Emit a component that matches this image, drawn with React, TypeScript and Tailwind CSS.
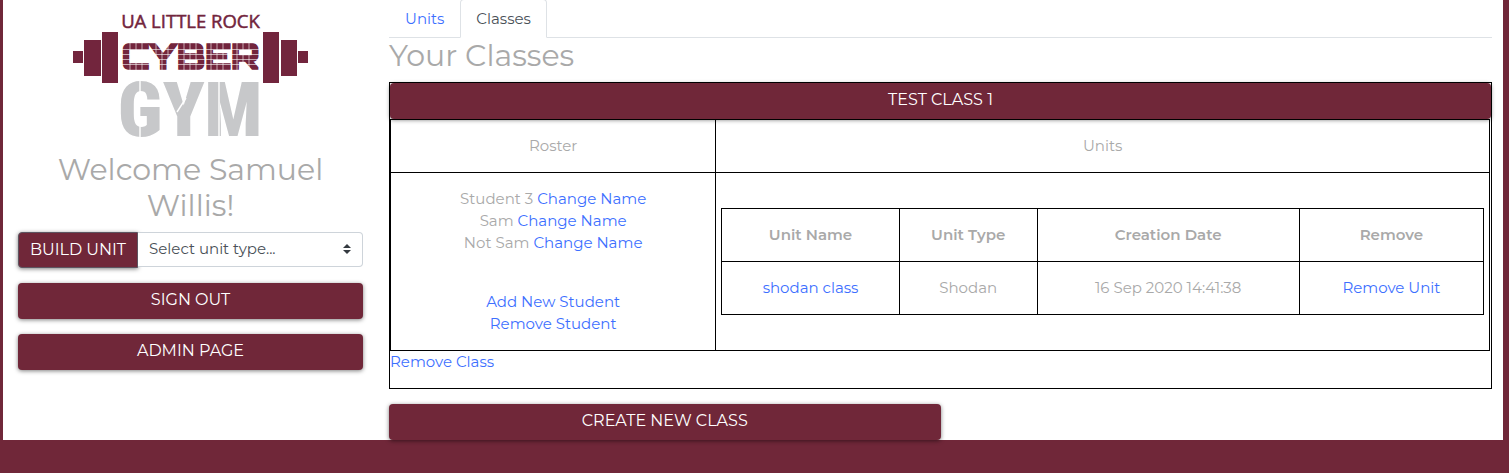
import { ReactNode } from "react";

const buttonStyle =
  "h-9 rounded-sm bg-[#702739] pb-0.5 text-center text-[16px] leading-[22px] font-normal text-white shadow-[0_1px_4px_rgba(0,0,0,0.5)] uppercase cursor-pointer";

const cell = "border border-black px-[5px] py-[15px]";

const students = ["Student 3", "Sam", "Not Sam"];

const units = [{ name: "shodan class", type: "Shodan", created: "16 Sep 2020 14:41:38" }];

function Link({ children }: { children: ReactNode }) {
  return (
    <a href="#" className="text-[#3d6fff] hover:underline">
      {children}
    </a>
  );
}

function Logo() {
  return (
    <svg viewBox="0 0 242 130" className="mx-auto block w-[242px] overflow-visible" role="img" aria-label="UA Little Rock Cyber Gym">
      <g fill="#72253d">
        <rect x="3" y="41" width="10" height="12" />
        <rect x="14" y="30" width="17" height="36" />
        <rect x="32" y="22" width="16" height="51" />
        <rect x="193" y="22" width="16" height="51" />
        <rect x="211" y="30" width="16" height="36" />
        <rect x="228" y="41" width="10" height="12" />
        <text x="120.5" y="18" textAnchor="middle" fontSize="18.5" fontFamily="Open Sans, sans-serif" stroke="#72253d" strokeWidth="0.5">
          UA LITTLE ROCK
        </text>
        <text x="120.5" y="59" textAnchor="middle" fontSize="34" fontWeight="800" fontFamily="Orbitron, DejaVu Sans Mono, monospace" stroke="#72253d" strokeWidth="1.6">
          CYBER
        </text>
      </g>
      <g stroke="#fff" strokeWidth="0.6">
        <path d="M52 39.5H190M52 44.5H190M52 49.5H190M52 54.5H190" />
        <path d="M60 29V63M66 29V63M72 29V63M86 29V63M92 29V63M98 29V63M114 29V63M120 29V63M126 29V63M141 29V63M147 29V63M153 29V63M167 29V63M173 29V63M179 29V63" />
      </g>
      <text x="120" y="126" textAnchor="middle" fontSize="76" fontWeight="900" fill="#c7c8ca" fontFamily="Roboto Condensed, sans-serif">
        GYM
      </text>
      <path d="M70 69V82M70 114V128M107 102L116 88M149 70V128" stroke="#fff" strokeWidth="1.4" />
    </svg>
  );
}

function Sidebar() {
  return (
    <aside className="w-1/4 px-[15px] pt-[10px]">
      <Logo />
      <h2 className="mt-3 mb-2 text-center text-[30px] leading-9">Welcome Samuel Willis!</h2>
      <div className="flex">
        <button className="h-9 w-[120px] rounded-l-sm border border-[#5d5561] bg-[#702739] text-[16px] leading-[22px] font-normal whitespace-nowrap text-white uppercase shadow-[0_1px_4px_rgba(0,0,0,0.5)]">
          Build Unit
        </button>
        <div className="relative h-[35px] flex-1">
          <select
            aria-label="Unit type"
            className="h-full w-full appearance-none rounded-r-sm border border-l-0 border-[#ced4da] bg-white pr-7 pb-0.5 pl-[11px] text-[15px] text-[#495057]"
          >
            <option>Select unit type...</option>
          </select>
          <svg viewBox="0 0 8 10" className="pointer-events-none absolute top-3 right-3 h-[10px] w-2" fill="#343a40">
            <path d="M4 0L0 4h8zM4 10L0 6h8z" />
          </svg>
        </div>
      </div>
      <div className="mt-[15px] flex flex-col gap-[15px]">
        <button className={buttonStyle}>Sign Out</button>
        <button className={buttonStyle}>Admin Page</button>
      </div>
    </aside>
  );
}

function UnitTable() {
  return (
    <table className="w-full table-fixed border-collapse">
      <thead>
        <tr>
          <th className={`${cell} w-[23.3%] font-semibold`}>Unit Name</th>
          <th className={`${cell} w-[18.1%] font-semibold`}>Unit Type</th>
          <th className={`${cell} font-semibold`}>Creation Date</th>
          <th className={`${cell} w-[24.2%] font-semibold`}>Remove</th>
        </tr>
      </thead>
      <tbody>
        {units.map((unit) => (
          <tr key={unit.name}>
            <td className={cell}>
              <Link>{unit.name}</Link>
            </td>
            <td className={cell}>{unit.type}</td>
            <td className={cell}>{unit.created}</td>
            <td className={cell}>
              <Link>Remove Unit</Link>
            </td>
          </tr>
        ))}
      </tbody>
    </table>
  );
}

function ClassCard() {
  return (
    <section className="border border-black pb-[15px]">
      <button className={`${buttonStyle} block w-full`}>Test Class 1</button>
      <div className="pr-px">
        <table className="w-full table-fixed border-collapse text-center">
          <thead>
            <tr>
              <th className={`${cell} w-[29.6%] font-normal`}>Roster</th>
              <th className={`${cell} font-normal`}>Units</th>
            </tr>
          </thead>
          <tbody>
            <tr>
              <td className={cell}>
                <ul>
                  {students.map((student) => (
                    <li key={student}>
                      {student} <Link>Change Name</Link>
                    </li>
                  ))}
                </ul>
                <div className="mt-[37px] flex flex-col items-center">
                  <Link>Add New Student</Link>
                  <Link>Remove Student</Link>
                </div>
              </td>
              <td className={cell}>
                <UnitTable />
              </td>
            </tr>
          </tbody>
        </table>
      </div>
      <Link>Remove Class</Link>
    </section>
  );
}

export default function App() {
  return (
    <div className="min-h-screen bg-[#702739] pr-[6px] pl-[3px] font-['Montserrat','Inter',sans-serif] text-[15px] leading-[22px] font-normal text-[#a9a9a9]">
      <div className="flex bg-white">
        <Sidebar />
        <main className="w-3/4 px-[11px]">
          <nav className="flex h-[38px] border-b border-[#dee2e6]">
            <a href="#" className="px-4 pt-2 text-[#3d6fff]">
              Units
            </a>
            <a href="#" aria-current="page" className="-mt-px -mb-px rounded-t-sm border border-[#dee2e6] border-b-white bg-white px-[15px] pt-2 text-[#495057]">
              Classes
            </a>
          </nav>
          <h2 className="mb-2 text-[30px] leading-9">Your Classes</h2>
          <ClassCard />
          <button className={`${buttonStyle} mt-[15px] block w-1/2`}>Create New Class</button>
        </main>
      </div>
    </div>
  );
}
